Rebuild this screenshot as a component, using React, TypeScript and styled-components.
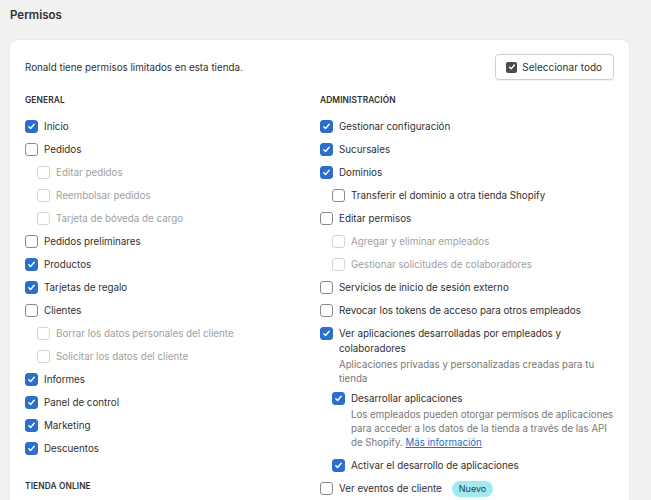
import React from 'react';
import styled, { createGlobalStyle } from 'styled-components';

type Perm = {
  label: string;
  checked?: boolean;
  disabled?: boolean;
  description?: React.ReactNode;
  badge?: string;
  children?: Perm[];
};

type Section = { title: string; items: Perm[] };

function Check({ checked, disabled }: { checked?: boolean; disabled?: boolean }) {
  return (
    <Box $checked={checked} $disabled={disabled}>
      {checked && (
        <svg width="9" height="9" viewBox="0 0 10 10">
          <path d="M2 5.2l2 2 4-4.6" fill="none" stroke="#fff" strokeWidth="1.6" strokeLinecap="round" strokeLinejoin="round" />
        </svg>
      )}
    </Box>
  );
}

function PermItem({ perm }: { perm: Perm }) {
  return (
    <Item>
      <Row>
        <Check checked={perm.checked} disabled={perm.disabled} />
        <Label $disabled={perm.disabled}>
          {perm.label}
          {perm.badge && <Badge>{perm.badge}</Badge>}
        </Label>
      </Row>
      {perm.description && <Description>{perm.description}</Description>}
      {perm.children && (
        <SubList $afterDescription={!!perm.description}>
          {perm.children.map((c) => (
            <PermItem key={c.label} perm={c} />
          ))}
        </SubList>
      )}
    </Item>
  );
}

function Column({ sections }: { sections: Section[] }) {
  return (
    <Col>
      {sections.map((s) => (
        <SectionBlock key={s.title}>
          <SectionTitle>{s.title}</SectionTitle>
          <List>
            {s.items.map((p) => (
              <PermItem key={p.label} perm={p} />
            ))}
          </List>
        </SectionBlock>
      ))}
    </Col>
  );
}

export default function App() {
  return (
    <>
      <GlobalStyle />
      <Page>
        <Title>Permisos</Title>
        <Card>
          <CardHeader>
            <Intro>Ronald tiene permisos limitados en esta tienda.</Intro>
            <SelectAll>
              <SelectIcon>
                <svg width="8" height="8" viewBox="0 0 10 10">
                  <path d="M2 5.2l2 2 4-4.6" fill="none" stroke="#fff" strokeWidth="1.8" strokeLinecap="round" strokeLinejoin="round" />
                </svg>
              </SelectIcon>
              Seleccionar todo
            </SelectAll>
          </CardHeader>
          <Columns>
            <Column sections={leftSections} />
            <Column sections={rightSections} />
          </Columns>
        </Card>
      </Page>
    </>
  );
}

const GlobalStyle = createGlobalStyle`
  body {
    margin: 0;
    background: #f1f1f1;
    font-family: Inter, "Noto Sans", sans-serif;
    color: #303030;
    overflow: hidden;
  }
`;

const Page = styled.div`
  padding: 0 22px 0 10px;
  height: 500px;
`;

const Title = styled.h1`
  margin: 0;
  padding: 7px 0 0;
  height: 33px;
  font-size: 11.5px;
  line-height: 16px;
  font-weight: 600;
  color: #303030;
`;

const Card = styled.div`
  background: #fff;
  border-radius: 8px;
  padding: 14px 14px 20px 15px;
  box-shadow: 0 0 0 1px rgba(0, 0, 0, 0.03);
`;

const CardHeader = styled.div`
  display: flex;
  align-items: center;
  justify-content: space-between;
  padding-right: 1px;
`;

const Intro = styled.p`
  margin: 0;
  font-size: 9.8px;
  line-height: 15px;
`;

const SelectAll = styled.button`
  display: flex;
  align-items: center;
  gap: 5px;
  height: 26px;
  padding: 0 11px 0 10px;
  border: 1px solid #cfcfcf;
  border-radius: 4px;
  background: #fff;
  font-family: inherit;
  font-size: 10px;
  color: #303030;
  box-shadow: 0 1px 0 rgba(0, 0, 0, 0.05);
`;

const SelectIcon = styled.span`
  display: inline-flex;
  align-items: center;
  justify-content: center;
  width: 11px;
  height: 11px;
  border-radius: 2px;
  background: #4a4a4a;
`;

const Columns = styled.div`
  display: grid;
  grid-template-columns: 295px 1fr;
  margin-top: 13px;
`;

const Col = styled.div`
  display: flex;
  flex-direction: column;
  gap: 23px;
`;

const SectionBlock = styled.div``;

const SectionTitle = styled.h2`
  margin: 0 0 12px;
  font-size: 8.4px;
  line-height: 14px;
  font-weight: 600;
  letter-spacing: 0.1px;
  text-transform: uppercase;
  color: #303030;
`;

const List = styled.div`
  display: flex;
  flex-direction: column;
  gap: 8px;
`;

const Item = styled.div`
  display: flex;
  flex-direction: column;
`;

const Row = styled.div`
  display: flex;
  align-items: flex-start;
  gap: 6px;
`;

const Box = styled.span<{ $checked?: boolean; $disabled?: boolean }>`
  flex: none;
  box-sizing: border-box;
  width: 13px;
  height: 13px;
  margin-top: 1px;
  border-radius: 3px;
  display: inline-flex;
  align-items: center;
  justify-content: center;
  background: ${(p) => (p.$checked ? '#2c6ecb' : '#fff')};
  border: ${(p) =>
    p.$checked ? '1px solid #2c6ecb' : p.$disabled ? '1px solid #d4d4d4' : '1.3px solid #8a8a8a'};
`;

const Label = styled.span<{ $disabled?: boolean }>`
  font-size: 9.8px;
  line-height: 15px;
  color: ${(p) => (p.$disabled ? '#a0a0a0' : '#303030')};
`;

const Badge = styled.span`
  display: inline-block;
  margin-left: 10px;
  padding: 0 7px;
  border-radius: 10px;
  background: #a4e8f2;
  color: #1f3d45;
  font-size: 9px;
  line-height: 16px;
`;

const Description = styled.div`
  margin: 2px 0 0 19px;
  font-size: 9.7px;
  line-height: 14px;
  color: #777777;
`;

const SubList = styled.div<{ $afterDescription?: boolean }>`
  display: flex;
  flex-direction: column;
  gap: 8px;
  margin: ${(p) => (p.$afterDescription ? '5px' : '8px')} 0 0 12px;
`;

const Link = styled.a`
  color: #2c6ecb;
  text-decoration: underline;
`;

const leftSections: Section[] = [
  {
    title: 'General',
    items: [
      { label: 'Inicio', checked: true },
      {
        label: 'Pedidos',
        children: [
          { label: 'Editar pedidos', disabled: true },
          { label: 'Reembolsar pedidos', disabled: true },
          { label: 'Tarjeta de bóveda de cargo', disabled: true },
        ],
      },
      { label: 'Pedidos preliminares' },
      { label: 'Productos', checked: true },
      { label: 'Tarjetas de regalo', checked: true },
      {
        label: 'Clientes',
        children: [
          { label: 'Borrar los datos personales del cliente', disabled: true },
          { label: 'Solicitar los datos del cliente', disabled: true },
        ],
      },
      { label: 'Informes', checked: true },
      { label: 'Panel de control', checked: true },
      { label: 'Marketing', checked: true },
      { label: 'Descuentos', checked: true },
    ],
  },
  { title: 'Tienda online', items: [] },
];

const rightSections: Section[] = [
  {
    title: 'Administración',
    items: [
      { label: 'Gestionar configuración', checked: true },
      { label: 'Sucursales', checked: true },
      {
        label: 'Dominios',
        checked: true,
        children: [{ label: 'Transferir el dominio a otra tienda Shopify' }],
      },
      {
        label: 'Editar permisos',
        children: [
          { label: 'Agregar y eliminar empleados', disabled: true },
          { label: 'Gestionar solicitudes de colaboradores', disabled: true },
        ],
      },
      { label: 'Servicios de inicio de sesión externo' },
      { label: 'Revocar los tokens de acceso para otros empleados' },
      {
        label: 'Ver aplicaciones desarrolladas por empleados y colaboradores',
        checked: true,
        description: 'Aplicaciones privadas y personalizadas creadas para tu tienda',
        children: [
          {
            label: 'Desarrollar aplicaciones',
            checked: true,
            description: (
              <>
                Los empleados pueden otorgar permisos de aplicaciones para acceder a los datos de
                la tienda a través de las API de Shopify. <Link href="#">Más información</Link>
              </>
            ),
          },
          { label: 'Activar el desarrollo de aplicaciones', checked: true },
        ],
      },
      { label: 'Ver eventos de cliente', badge: 'Nuevo' },
    ],
  },
];
